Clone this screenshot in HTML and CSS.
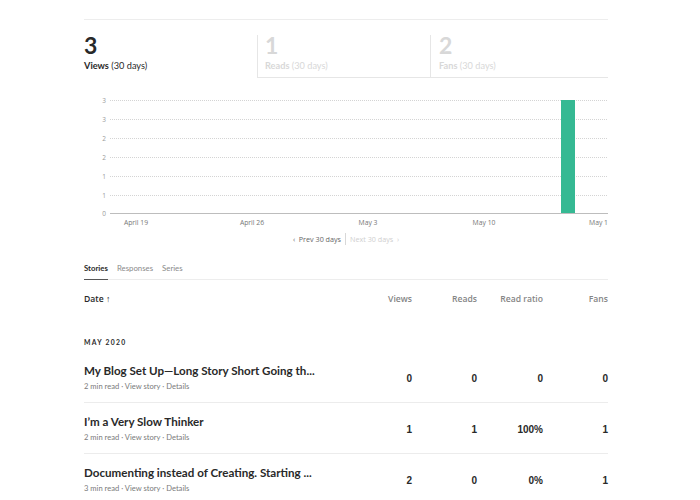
FILE: index.html
```html
<!DOCTYPE html>
<html>
<head>
<meta charset="utf-8">
<link rel="stylesheet" href="styles.css">
</head>
<body>
<div class="page">
  <div class="top-rule"></div>
  <div class="stats">
    <div class="stat active">
      <div class="stat-num">3</div>
      <div class="stat-label"><b>Views</b> (30 days)</div>
    </div>
    <div class="stat">
      <div class="stat-num">1</div>
      <div class="stat-label"><b>Reads</b> (30 days)</div>
    </div>
    <div class="stat last">
      <div class="stat-num">2</div>
      <div class="stat-label"><b>Fans</b> (30 days)</div>
    </div>
  </div>

  <svg class="chart" width="524" height="140" viewBox="0 0 524 140">
    <g class="grid">
      <line x1="26" y1="10.5" x2="524" y2="10.5"/>
      <line x1="26" y1="29.5" x2="524" y2="29.5"/>
      <line x1="26" y1="48.5" x2="524" y2="48.5"/>
      <line x1="26" y1="67.5" x2="524" y2="67.5"/>
      <line x1="26" y1="86.5" x2="524" y2="86.5"/>
      <line x1="26" y1="105.5" x2="524" y2="105.5"/>
    </g>
    <line class="axis" x1="26" y1="123.5" x2="524" y2="123.5"/>
    <g class="ylab">
      <text x="22" y="12.5">3</text>
      <text x="22" y="31.5">3</text>
      <text x="22" y="50.5">2</text>
      <text x="22" y="69.5">2</text>
      <text x="22" y="88.5">1</text>
      <text x="22" y="107.5">1</text>
      <text x="22" y="125.5">0</text>
    </g>
    <g class="xlab">
      <text x="52" y="134.5">April 19</text>
      <text x="168" y="134.5">April 26</text>
      <text x="284" y="134.5">May 3</text>
      <text x="400" y="134.5">May 10</text>
      <text x="524" y="134.5" class="end">May 1</text>
    </g>
    <rect class="bar" x="477" y="10" width="14" height="113"/>
  </svg>

  <div class="pager">
    <span class="prev">‹&nbsp; Prev 30 days</span>
    <span class="sep"></span>
    <span class="next">Next 30 days &nbsp;›</span>
  </div>

  <nav class="tabs">
    <span class="tab active">Stories</span>
    <span class="tab">Responses</span>
    <span class="tab">Series</span>
  </nav>

  <div class="row head">
    <div class="c-title">Date <span class="arrow">&#x2191;</span></div>
    <div class="c-num">Views</div>
    <div class="c-num">Reads</div>
    <div class="c-num">Read ratio</div>
    <div class="c-num">Fans</div>
  </div>

  <div class="month">May 2020</div>

  <div class="row story">
    <div class="c-title">
      <div class="title">My Blog Set Up—Long Story Short Going th...</div>
      <div class="meta">2 min read · <span class="link">View story</span> · Details</div>
    </div>
    <div class="c-num val">0</div>
    <div class="c-num val">0</div>
    <div class="c-num val">0</div>
    <div class="c-num val">0</div>
  </div>
  <div class="row story">
    <div class="c-title">
      <div class="title">I’m a Very Slow Thinker</div>
      <div class="meta">2 min read · <span class="link">View story</span> · Details</div>
    </div>
    <div class="c-num val">1</div>
    <div class="c-num val">1</div>
    <div class="c-num val">100%</div>
    <div class="c-num val">1</div>
  </div>
  <div class="row story">
    <div class="c-title">
      <div class="title">Documenting instead of Creating. Starting ...</div>
      <div class="meta">3 min read · <span class="link">View story</span> · Details</div>
    </div>
    <div class="c-num val">2</div>
    <div class="c-num val">0</div>
    <div class="c-num val">0%</div>
    <div class="c-num val">1</div>
  </div>
</div>
</body>
</html>
```

FILE: styles.css
```css
html, body {
  margin: 0;
  padding: 0;
  background: #fff;
}
body {
  font-family: Lato, "Open Sans", sans-serif;
  color: #292929;
  width: 700px;
  height: 500px;
  overflow: hidden;
}
.page {
  margin-left: 84px;
  width: 524px;
  padding-top: 19px;
}
.top-rule {
  border-top: 1px solid #ededed;
}
.stats {
  display: flex;
  margin-top: 15px;
  height: 43px;
}
.stat {
  flex: 0 0 173px;
  box-sizing: border-box;
  padding-left: 7px;
  border-left: 1px solid #e6e6e6;
  border-bottom: 1px solid #e6e6e6;
  color: #d8d8d8;
}
.stat.active {
  padding-left: 0;
  border-left: none;
  border-bottom: none;
  color: #292929;
}
.stat.last {
  flex: 1 1 auto;
  padding-left: 8px;
}
.stat-num {
  font-size: 23px;
  font-weight: 700;
  line-height: 22px;
  margin-top: -1px;
}
.stat-label {
  font-size: 9.2px;
  line-height: 14px;
  margin-top: 3px;
}
.stat-label b {
  font-weight: 700;
}
.chart {
  display: block;
  margin-top: 12px;
  overflow: hidden;
}
.grid line {
  stroke: #d4d4d4;
  stroke-width: 1;
  stroke-dasharray: 1 1;
}
.axis {
  stroke: #bdbdbd;
  stroke-width: 1;
}
.ylab text {
  font-family: "Open Sans", sans-serif;
  font-size: 6.5px;
  fill: #9a9a9a;
  text-anchor: end;
}
.xlab text {
  font-family: "Open Sans", sans-serif;
  font-size: 6.8px;
  fill: #777;
  text-anchor: middle;
}
.xlab text.end {
  text-anchor: end;
}
.bar {
  fill: #35b993;
}
.pager {
  display: flex;
  justify-content: center;
  align-items: center;
  gap: 4px;
  height: 14px;
  margin-top: 2px;
  font-family: "Open Sans", sans-serif;
  font-size: 7.2px;
  padding-left: 0;
}
.prev { color: #666; }
.next { color: #cfcfcf; }
.sep {
  width: 1px;
  height: 12px;
  background: #d8d8d8;
}
.tabs {
  display: flex;
  gap: 9px;
  margin-top: 14px;
  border-bottom: 1px solid #ededed;
  font-size: 7.8px;
  line-height: 16px;
}
.tab {
  color: #8a8a8a;
  padding-bottom: 3px;
}
.tab.active {
  color: #292929;
  font-weight: 700;
  border-bottom: 1px solid #555;
  margin-bottom: -1px;
}
.row {
  display: grid;
  grid-template-columns: 1fr 65px 65px 66px 65px;
  align-items: center;
}
.head {
  height: 37px;
  padding-top: 1px;
  box-sizing: border-box;
  font-family: "Open Sans", sans-serif;
  font-size: 8.6px;
  font-weight: 600;
  color: #858585;
}
.head .c-title {
  color: #292929;
  font-weight: 600;
  font-size: 8.6px;
}
.arrow {
  font-size: 8.6px;
  font-weight: 700;
}
.c-num {
  text-align: right;
}
.month {
  margin-top: 18px;
  margin-bottom: 3px;
  line-height: 14px;
  font-size: 6.8px;
  font-weight: 700;
  letter-spacing: 1.3px;
  text-transform: uppercase;
  color: #292929;
}
.story {
  padding: 11px 0 9px;
  border-bottom: 1px solid #ececec;
}
.title {
  font-size: 11.6px;
  font-weight: 700;
  line-height: 16px;
  color: #292929;
  white-space: nowrap;
}
.meta {
  font-size: 7.6px;
  line-height: 14px;
  color: #7a7a7a;
}
.val {
  font-family: "Liberation Sans", Arial, sans-serif;
  font-weight: 700;
  font-size: 10px;
  color: #292929;
}
```
